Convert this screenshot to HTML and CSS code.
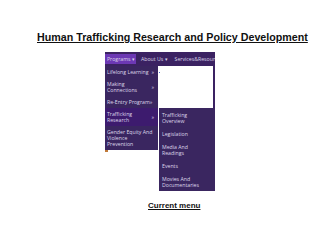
FILE: index.html
```html
<!DOCTYPE html>
<html>
<head>
<meta charset="utf-8">
<link rel="stylesheet" href="styles.css">
</head>
<body>
<div class="page">
  <h1 class="title">Human Trafficking Research and Policy Development</h1>
  <div class="navwrap">
    <nav class="nav">
      <span class="nav-item active">Programs ▾</span>
      <span class="nav-item">About Us ▾</span>
      <span class="nav-item">Services&amp;Resources ▾</span>
    </nav>
    <ul class="dropdown">
      <li class="dd-item"><span>Lifelong Learning</span><span class="arr">»</span></li>
      <li class="dd-item"><span>Making<br>Connections</span><span class="arr">»</span></li>
      <li class="dd-item"><span>Re-Entry Program»</span></li>
      <li class="dd-item current"><span>Trafficking<br>Research</span><span class="arr">»</span></li>
      <li class="dd-item"><span>Gender Equity And<br>Violence<br>Prevention</span></li>
    </ul>
    <div class="blank"><span class="dot"></span></div>
    <ul class="submenu">
      <li class="sub-item">Trafficking<br>Overview</li>
      <li class="sub-item">Legislation</li>
      <li class="sub-item">Media And<br>Readings</li>
      <li class="sub-item">Events</li>
      <li class="sub-item">Movies And<br>Documentaries</li>
    </ul>
    <span class="mark"></span>
  </div>
  <p class="current-label">Current menu</p>
</div>
</body>
</html>
```
FILE: styles.css
```css
html, body {
  margin: 0;
  padding: 0;
  background: #ffffff;
}
.page {
  width: 320px;
  height: 240px;
  overflow: hidden;
  display: flex;
  flex-direction: column;
  font-family: "Liberation Sans", Arial, sans-serif;
}
.title {
  margin: 31px 0 0 37px;
  font-size: 10.7px;
  line-height: 13px;
  font-weight: bold;
  text-decoration: underline;
  color: #111;
  white-space: nowrap;
}
.navwrap {
  position: relative;
  margin: 8px 0 0 105px;
  width: 110px;
  height: 14px;
}
.nav {
  display: flex;
  align-items: center;
  gap: 3px;
  height: 14px;
  background: #3b2262;
  overflow: hidden;
  white-space: nowrap;
  font-family: "Open Sans", sans-serif;
  font-size: 5.2px;
  color: #ddd6ea;
}
.nav-item {
  padding: 0 2px;
  line-height: 10px;
}
.nav-item.active {
  background: #6c38b4;
  width: 27px;
  flex: none;
}
.dropdown, .submenu {
  list-style: none;
  margin: 0;
  padding: 0;
  position: absolute;
  background: #3a2660;
  font-family: "Open Sans", sans-serif;
  font-size: 5.2px;
  line-height: 6px;
  color: #ddd6ea;
}
.dropdown {
  left: 0;
  top: 14px;
  width: 53px;
}
.dd-item {
  display: flex;
  align-items: center;
  justify-content: space-between;
  padding: 3px 4px 3px 2px;
}
.dd-item.current {
  background: #3d1b6e;
}
.arr {
  flex: none;
}
.blank {
  position: absolute;
  left: 54px;
  top: 14px;
  width: 54px;
  height: 42px;
  background: #ffffff;
  border-right: 2px solid #3b2262;
}
.dot {
  position: absolute;
  left: 0;
  top: 6px;
  width: 1px;
  height: 1px;
  background: #4a6ad0;
}
.submenu {
  left: 54px;
  top: 56px;
  width: 56px;
}
.sub-item {
  padding: 3.5px 3px;
}
.mark {
  position: absolute;
  left: 0;
  top: 98px;
  width: 3px;
  height: 2px;
  background: #c07a3a;
}
.current-label {
  margin: 135px 0 0 148px;
  font-size: 8px;
  line-height: 10px;
  font-weight: bold;
  text-decoration: underline;
  color: #111;
}
```
